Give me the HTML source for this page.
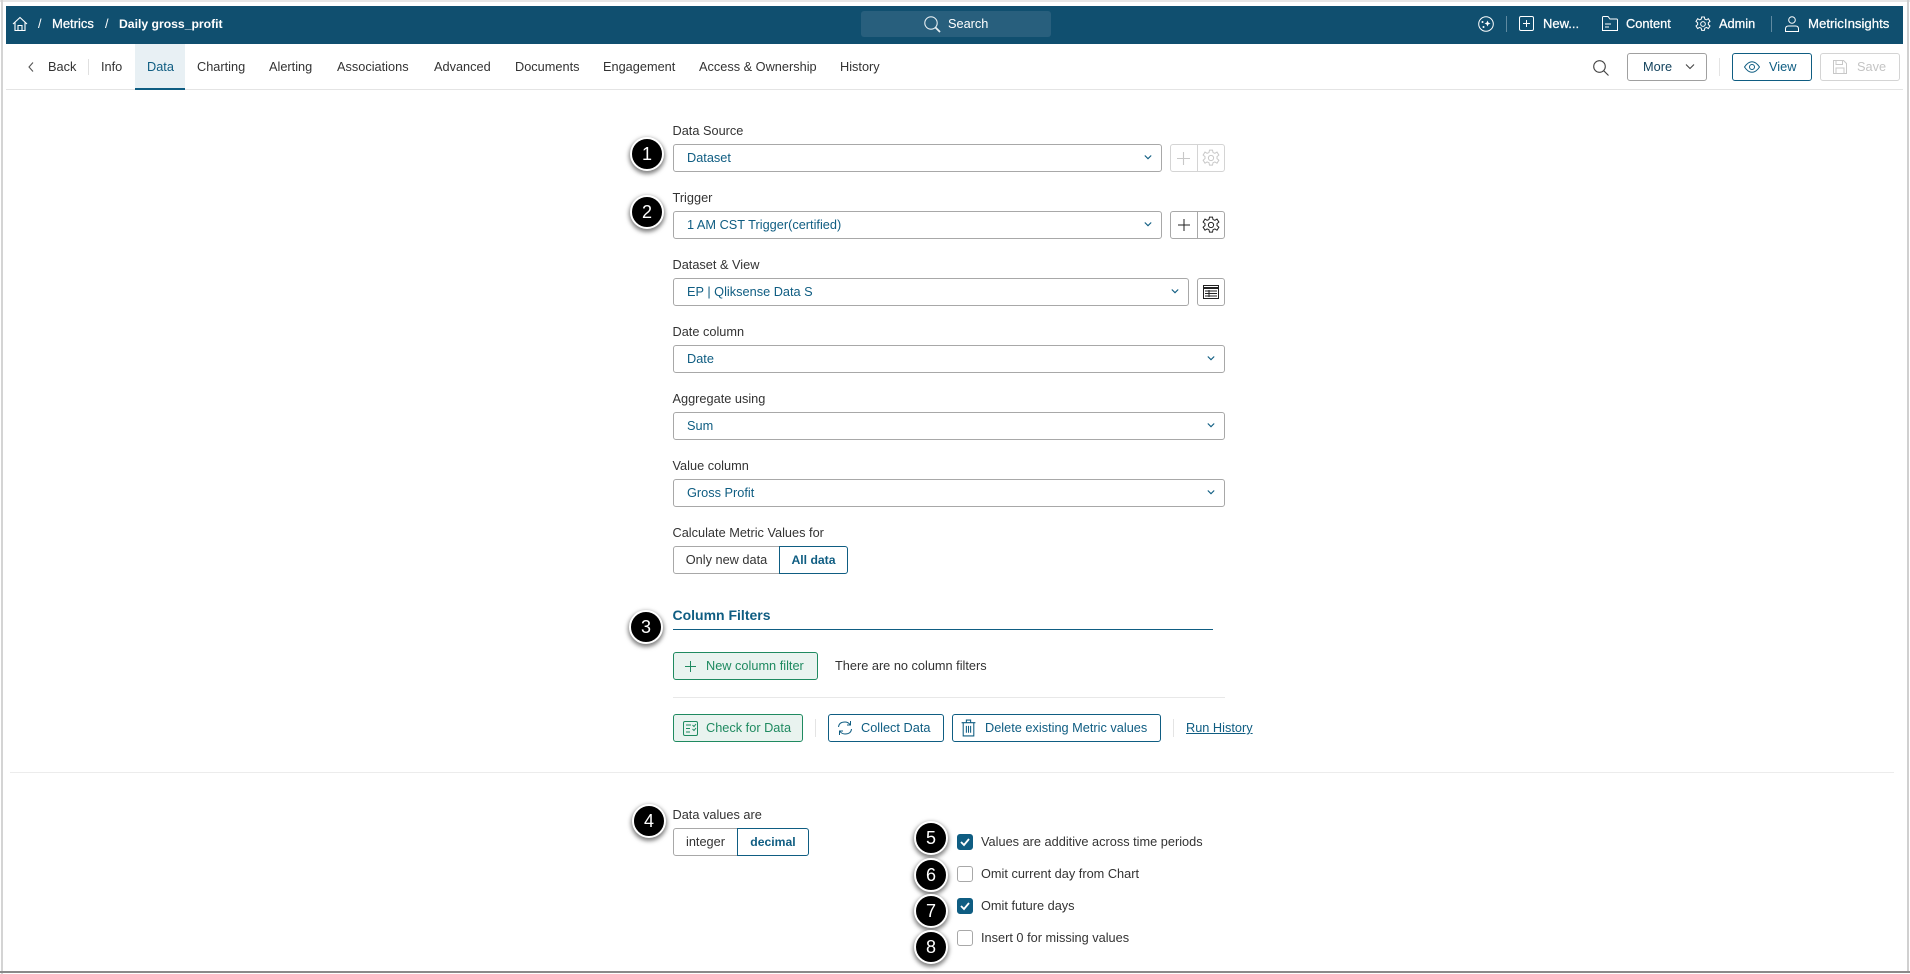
<!DOCTYPE html>
<html><head><meta charset="utf-8"><style>
*{box-sizing:border-box}
html,body{margin:0;padding:0;width:1910px;height:974px;overflow:hidden;background:#fff;font-family:"Liberation Sans",sans-serif;font-size:12.75px;color:#333}
.a{position:absolute}
.t{position:absolute;white-space:nowrap;line-height:16px;font-size:12.75px}
.sel{position:absolute;height:28px;border:1px solid #a8a8a8;border-radius:3px;background:#fff;color:#0f5d82;line-height:26px;padding-left:13px;font-size:12.75px}
.sel svg{position:absolute;right:9px;top:10px}
.btn{position:absolute;height:28px;border:1px solid #0f5d82;border-radius:3px;background:#fff;color:#0f5d82;line-height:26px;font-size:12.75px;white-space:nowrap}
.g{border-color:#1f8a60;background:#e9f3ef;color:#1f8a60}
.b{position:absolute;width:34px;height:34px;border-radius:50%;background:#000;border:2px solid #fff;box-shadow:0 2px 4px 1px rgba(0,0,0,.5);color:#fff;text-align:center;line-height:30px;font-size:18px}
.cb{position:absolute;left:957px;width:16px;height:16px;border-radius:3px;border:1px solid #a8a8a8;background:#fff}
.cb.on{background:#0f5d82;border-color:#0f5d82}
.w{color:#fff}
.m{-webkit-text-stroke:.25px #fff}
svg{display:block;overflow:visible}
</style></head><body>
<div class="a" style="left:0;top:0;width:1910px;height:2px;background:#e6e6e6"></div>
<div class="a" style="left:1px;top:0;width:2px;height:974px;background:#d4d4d4"></div>
<div class="a" style="left:1907px;top:0;width:2px;height:972px;background:#d0d0d0"></div>
<div class="a" style="left:0;top:971px;width:1910px;height:2px;background:#8a8a8a"></div>

<div class="a" style="left:6px;top:6px;width:1897px;height:38px;background:#104f6f"></div>
<svg class="a" style="left:12px;top:16px" width="16" height="16" viewBox="0 0 16 16" fill="none" stroke="#fff" stroke-width="1.1"><path d="M1 8 8 1.500 15 8M3 6.500V14.500H13V6.500M6 14.500V9.500H10V14.500"/></svg>
<span class="t w" style="left:38px;top:16px">/</span>
<span class="t w m" style="left:52px;top:16px;font-size:13px">Metrics</span>
<span class="t w" style="left:105px;top:16px">/</span>
<span class="t w" style="left:119px;top:16px;font-size:12.2px;font-weight:bold">Daily gross_profit</span>

<div class="a" style="left:861px;top:11px;width:190px;height:26px;background:#285f7d;border-radius:3px"></div>
<svg class="a" style="left:924px;top:16px" width="17" height="17" viewBox="0 0 17 17" fill="none" stroke="#e6eef2" stroke-width="1.1"><circle cx="7" cy="7" r="6.200"/><path d="M11.500 11.500 16 16" stroke-width="1.800"/></svg>
<span class="t w" style="left:948px;top:16px">Search</span>

<svg class="a" style="left:1478px;top:16px" width="16" height="16" viewBox="0 0 16 16" fill="none" stroke="#fff" stroke-width="1"><circle cx="8" cy="8" r="7.300"/><path d="M9.500 4.500 10.400 6.600 12.500 7.500 10.400 8.400 9.500 10.500 8.600 8.400 6.500 7.500 8.600 6.600Z" fill="#fff" stroke="none"/><circle cx="4.500" cy="6" r="1" fill="#fff" stroke="none"/><circle cx="5.500" cy="11" r="1" fill="#fff" stroke="none"/></svg>
<div class="a" style="left:1506px;top:16px;width:1px;height:16px;background:#5f8aa1"></div>
<svg class="a" style="left:1519px;top:16px" width="15" height="15" viewBox="0 0 15 15" fill="none" stroke="#fff" stroke-width="1"><rect x=".5" y=".5" width="14" height="14" rx="1.500"/><path d="M7.500 4v7M4 7.500h7"/></svg>
<span class="t w m" style="left:1543px;top:16px;font-size:13px">New...</span>
<svg class="a" style="left:1602px;top:16px" width="16" height="15" viewBox="0 0 16 15" fill="none" stroke="#fff" stroke-width="1"><path d="M.5 14.500V1.500Q.5.5 1.500.5H6L8 3H14.500Q15.500 3 15.500 4V14.500ZM3 8H9M3 11H7"/></svg>
<span class="t w m" style="left:1626px;top:16px;font-size:12.8px">Content</span>
<svg class="a" style="left:1695px;top:16px" width="16" height="16" viewBox="0 0 24 24" fill="none" stroke="#fff" stroke-width="1.500"><circle cx="12" cy="12" r="3.500"/><path d="M10 1.500h4l.7 3.200 2.500 1.100 2.800-1.700 2.500 4-2.500 2v2.800l2.500 2-2.500 4-2.800-1.700-2.500 1.100-.7 3.200h-4l-.7-3.200-2.500-1.100-2.800 1.700-2.500-4 2.500-2v-2.800l-2.500-2 2.500-4 2.800 1.700 2.500-1.100z"/></svg>
<span class="t w m" style="left:1719px;top:16px;font-size:12.8px">Admin</span>
<div class="a" style="left:1771px;top:16px;width:1px;height:16px;background:#5f8aa1"></div>
<svg class="a" style="left:1785px;top:16px" width="14" height="16" viewBox="0 0 14 16" fill="none" stroke="#fff" stroke-width="1"><circle cx="7" cy="4" r="3.300"/><path d="M.5 15.500V13Q.5 10 3.500 10H10.500Q13.500 10 13.500 13V15.500Z"/></svg>
<span class="t w m" style="left:1808px;top:16px;font-size:13.2px">MetricInsights</span>

<div class="a" style="left:6px;top:89px;width:1897px;height:1px;background:#e4e4e4"></div>
<div class="a" style="left:135px;top:44px;width:50px;height:46px;background:#e8f0f4;border-bottom:2px solid #0f5d82"></div>
<svg class="a" style="left:28px;top:62px" width="6" height="10" viewBox="0 0 6 10" fill="none" stroke="#555" stroke-width="1.100"><path d="M5 .5 1 5l4 4.500"/></svg>
<span class="t" style="left:48px;top:59px">Back</span>
<div class="a" style="left:88px;top:59px;width:1px;height:16px;background:#e0e0e0"></div>
<span class="t" style="left:101px;top:59px">Info</span>
<span class="t" style="left:147px;top:59px;color:#0f5d82">Data</span>
<span class="t" style="left:197px;top:59px">Charting</span>
<span class="t" style="left:269px;top:59px">Alerting</span>
<span class="t" style="left:337px;top:59px">Associations</span>
<span class="t" style="left:434px;top:59px">Advanced</span>
<span class="t" style="left:515px;top:59px">Documents</span>
<span class="t" style="left:603px;top:59px">Engagement</span>
<span class="t" style="left:699px;top:59px">Access &amp; Ownership</span>
<span class="t" style="left:840px;top:59px">History</span>

<svg class="a" style="left:1593px;top:60px" width="16" height="16" viewBox="0 0 16 16" fill="none" stroke="#444" stroke-width="1.100"><circle cx="6.500" cy="6.500" r="5.800"/><path d="M10.800 10.800 15.500 15.500"/></svg>
<div class="btn" style="left:1627px;top:53px;width:80px;border-color:#a0a0a0;color:#333"><span class="t" style="left:15px;top:5px;color:#0f3f5a">More</span><svg class="a" style="left:57px;top:10px" width="10" height="6" viewBox="0 0 10 6" fill="none" stroke="#444" stroke-width="1.100"><path d="M1 .5 5 4.500 9 .5"/></svg></div>
<div class="a" style="left:1719px;top:58px;width:1px;height:18px;background:#e4e4e4"></div>
<div class="btn" style="left:1732px;top:53px;width:80px"><svg class="a" style="left:11px;top:7px" width="16" height="12" viewBox="0 0 16 12" fill="none" stroke="#0f5d82" stroke-width="1"><path d="M.5 6Q4 .7 8 .7T15.500 6Q12 11.300 8 11.300T.5 6Z"/><circle cx="8" cy="6" r="2.500"/></svg><span class="t" style="left:36px;top:5px">View</span></div>
<div class="btn" style="left:1820px;top:53px;width:80px;border-color:#d4d4d4;color:#c4c4c4"><svg class="a" style="left:12px;top:6px" width="14" height="14" viewBox="0 0 14 14" fill="none" stroke="#c8c8c8" stroke-width="1"><path d="M.5.5H10.500L13.500 3.500V13.500H.5ZM3 .5V4.500H9.500V.5M3 13.500V8H11V13.500"/></svg><span class="t" style="left:36px;top:5px">Save</span></div>

<span class="t" style="left:672.500px;top:123px">Data Source</span>
<div class="sel" style="left:673px;top:144px;width:489px">Dataset<svg width="8" height="5" viewBox="0 0 10 6" fill="none" stroke="#0f5d82" stroke-width="1.400"><path d="M1 .5 5 4.500 9 .5"/></svg></div>
<div class="a" style="left:1170px;top:144px;width:55px;height:28px;border:1px solid #d4d4d4;border-radius:3px"></div>
<div class="a" style="left:1197px;top:144px;width:1px;height:28px;background:#d4d4d4"></div>
<svg class="a" style="left:1177px;top:152px" width="13" height="13" viewBox="0 0 13 13" stroke="#c8c8c8" stroke-width="1.100"><path d="M6.500 0V13M0 6.500H13"/></svg>
<svg class="a" style="left:1202px;top:149px" width="18" height="18" viewBox="0 0 24 24" fill="none" stroke="#c8c8c8" stroke-width="1.300"><circle cx="12" cy="12" r="3.500"/><path d="M10 1.500h4l.7 3.200 2.500 1.100 2.800-1.700 2.500 4-2.500 2v2.800l2.500 2-2.500 4-2.800-1.700-2.500 1.100-.7 3.200h-4l-.7-3.200-2.500-1.100-2.800 1.700-2.500-4 2.500-2v-2.800l-2.500-2 2.500-4 2.800 1.700 2.500-1.100z"/></svg>

<span class="t" style="left:672.500px;top:190px">Trigger</span>
<div class="sel" style="left:673px;top:211px;width:489px">1 AM CST Trigger(certified)<svg width="8" height="5" viewBox="0 0 10 6" fill="none" stroke="#0f5d82" stroke-width="1.400"><path d="M1 .5 5 4.500 9 .5"/></svg></div>
<div class="a" style="left:1170px;top:211px;width:55px;height:28px;border:1px solid #a8a8a8;border-radius:3px"></div>
<div class="a" style="left:1197px;top:211px;width:1px;height:28px;background:#a8a8a8"></div>
<svg class="a" style="left:1178px;top:219px" width="12" height="12" viewBox="0 0 13 13" stroke="#222" stroke-width="1.100"><path d="M6.500 0V13M0 6.500H13"/></svg>
<svg class="a" style="left:1202px;top:216px" width="18" height="18" viewBox="0 0 24 24" fill="none" stroke="#222" stroke-width="1.300"><circle cx="12" cy="12" r="3.500"/><path d="M10 1.500h4l.7 3.200 2.500 1.100 2.800-1.700 2.500 4-2.500 2v2.800l2.500 2-2.500 4-2.800-1.700-2.500 1.100-.7 3.200h-4l-.7-3.200-2.500-1.100-2.800 1.700-2.500-4 2.500-2v-2.800l-2.500-2 2.500-4 2.800 1.700 2.500-1.100z"/></svg>

<span class="t" style="left:672.500px;top:257px">Dataset &amp; View</span>
<div class="sel" style="left:673px;top:278px;width:516px">EP | Qliksense Data S<svg width="8" height="5" viewBox="0 0 10 6" fill="none" stroke="#0f5d82" stroke-width="1.400"><path d="M1 .5 5 4.500 9 .5"/></svg></div>
<div class="a" style="left:1197px;top:278px;width:28px;height:28px;border:1px solid #a8a8a8;border-radius:3px"></div>
<svg class="a" style="left:1203px;top:285px" width="16" height="14" viewBox="0 0 16 14" fill="none" stroke="#222" stroke-width="1"><rect x=".5" y=".5" width="15" height="13"/><path d="M.5 3h15" stroke-width="2"/><path d="M2 6h12M2 8.500h12M2 11h12M6 5v7"/></svg>

<span class="t" style="left:672.500px;top:324px">Date column</span>
<div class="sel" style="left:673px;top:345px;width:552px">Date<svg width="8" height="5" viewBox="0 0 10 6" fill="none" stroke="#0f5d82" stroke-width="1.400"><path d="M1 .5 5 4.500 9 .5"/></svg></div>
<span class="t" style="left:672.500px;top:391px">Aggregate using</span>
<div class="sel" style="left:673px;top:412px;width:552px">Sum<svg width="8" height="5" viewBox="0 0 10 6" fill="none" stroke="#0f5d82" stroke-width="1.400"><path d="M1 .5 5 4.500 9 .5"/></svg></div>
<span class="t" style="left:672.500px;top:458px">Value column</span>
<div class="sel" style="left:673px;top:479px;width:552px">Gross Profit<svg width="8" height="5" viewBox="0 0 10 6" fill="none" stroke="#0f5d82" stroke-width="1.400"><path d="M1 .5 5 4.500 9 .5"/></svg></div>

<span class="t" style="left:672.500px;top:525px">Calculate Metric Values for</span>
<div class="a" style="left:673px;top:546px;width:107px;height:28px;border:1px solid #a8a8a8;border-radius:3px 0 0 3px;text-align:center;line-height:26px">Only new data</div>
<div class="a" style="left:779px;top:546px;width:69px;height:28px;border:1px solid #0f5d82;border-radius:0 3px 3px 0;text-align:center;line-height:26px;color:#0f5d82;font-weight:bold;font-size:12.2px">All data</div>

<span class="t" style="left:672.500px;top:607px;font-size:14px;font-weight:bold;color:#0f5d82">Column Filters</span>
<div class="a" style="left:673px;top:629px;width:540px;height:1px;background:#0f5d82"></div>
<div class="btn g" style="left:673px;top:652px;width:145px"><svg class="a" style="left:11px;top:8px" width="11" height="11" viewBox="0 0 11 11" stroke="#1f8a60"><path d="M5.500 0V11M0 5.500H11"/></svg><span class="t" style="left:32px;top:5px">New column filter</span></div>
<span class="t" style="left:835px;top:658px">There are no column filters</span>
<div class="a" style="left:673px;top:697px;width:552px;height:1px;background:#e8e8e8"></div>

<div class="btn g" style="left:673px;top:714px;width:130px"><svg class="a" style="left:9px;top:6px" width="15" height="15" viewBox="0 0 15 15" fill="none" stroke="#1f8a60"><rect x=".5" y=".5" width="14" height="14" rx="1.500"/><path d="M3 4H8M3 7.500H7M3 11H7M9.500 4 11 5.500 13 3M9.500 8 11 9.500 13 7"/></svg><span class="t" style="left:32px;top:5px">Check for Data</span></div>
<div class="a" style="left:815px;top:719px;width:1px;height:18px;background:#e4e4e4"></div>
<div class="btn" style="left:828px;top:714px;width:116px"><svg class="a" style="left:8px;top:5px" width="16" height="16" viewBox="0 0 16 16" fill="none" stroke="#0f5d82"><path d="M1.500 7Q2 2 8 2 11 2 13 4.500M14.500 9Q14 14 8 14 5 14 3 11.500M13.500 1V5H10M2.500 15V11H6"/></svg><span class="t" style="left:32px;top:5px">Collect Data</span></div>
<div class="btn" style="left:952px;top:714px;width:209px"><svg class="a" style="left:8px;top:4px" width="15" height="18" viewBox="0 0 14 17" fill="none" stroke="#0f5d82"><path d="M.5 3.500H13.500M5 3.500V1H9V3.500M2 3.500V16H12V3.500M5 6.500V13M7 6.500V13M9 6.500V13"/></svg><span class="t" style="left:32px;top:5px">Delete existing Metric values</span></div>
<div class="a" style="left:1173px;top:719px;width:1px;height:18px;background:#e4e4e4"></div>
<span class="t" style="left:1186px;top:720px;color:#0f5d82;text-decoration:underline">Run History</span>

<div class="a" style="left:10px;top:772px;width:1884px;height:1px;background:#ececec"></div>

<span class="t" style="left:672.500px;top:807px">Data values are</span>
<div class="a" style="left:673px;top:828px;width:65px;height:28px;border:1px solid #a8a8a8;border-radius:3px 0 0 3px;text-align:center;line-height:26px">integer</div>
<div class="a" style="left:737px;top:828px;width:72px;height:28px;border:1px solid #0f5d82;border-radius:0 3px 3px 0;text-align:center;line-height:26px;color:#0f5d82;font-weight:bold;font-size:12.2px">decimal</div>

<div class="cb on" style="top:834px"><svg style="margin:3px 0 0 2px" width="10" height="8" viewBox="0 0 10 8" fill="none" stroke="#fff" stroke-width="1.800"><path d="M1 4 4 7 9 1"/></svg></div>
<span class="t" style="left:981px;top:834px">Values are additive across time periods</span>
<div class="cb" style="top:866px"></div>
<span class="t" style="left:981px;top:866px">Omit current day from Chart</span>
<div class="cb on" style="top:898px"><svg style="margin:3px 0 0 2px" width="10" height="8" viewBox="0 0 10 8" fill="none" stroke="#fff" stroke-width="1.800"><path d="M1 4 4 7 9 1"/></svg></div>
<span class="t" style="left:981px;top:898px">Omit future days</span>
<div class="cb" style="top:930px"></div>
<span class="t" style="left:981px;top:930px">Insert 0 for missing values</span>

<div class="b" style="left:630px;top:137px">1</div>
<div class="b" style="left:630px;top:195px">2</div>
<div class="b" style="left:629px;top:610px">3</div>
<div class="b" style="left:632px;top:804px">4</div>
<div class="b" style="left:914px;top:821px">5</div>
<div class="b" style="left:914px;top:858px">6</div>
<div class="b" style="left:914px;top:894px">7</div>
<div class="b" style="left:914px;top:930px">8</div>
</body></html>
